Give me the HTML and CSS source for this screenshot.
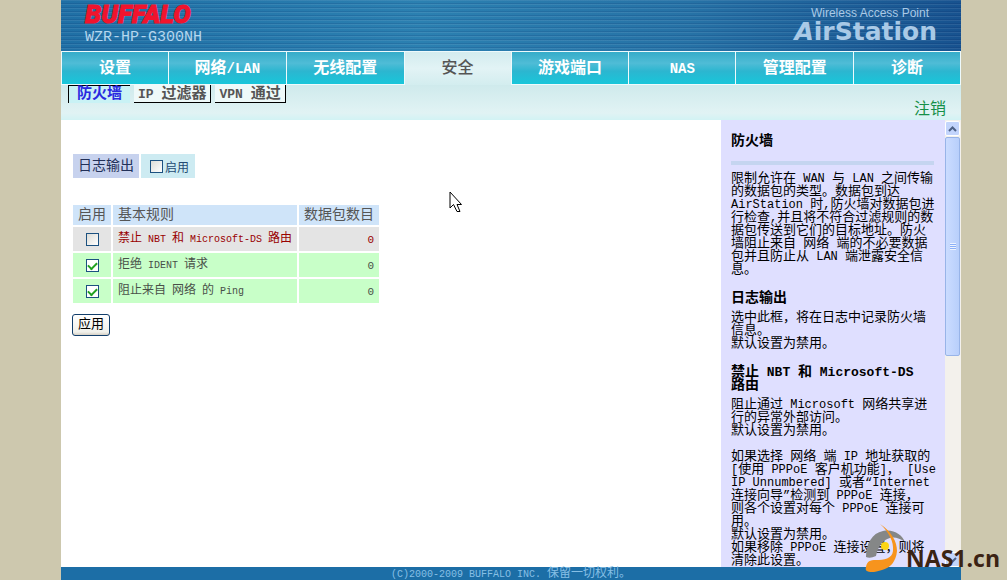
FILE: index.html
```html
<!DOCTYPE html>
<html lang="zh-CN">
<head>
<meta charset="utf-8">
<title>AirStation</title>
<link rel="stylesheet" href="styles.css">
</head>
<body>
<div class="page">
  <header class="banner">
    <div class="brand">
      <div class="logo">BUFFALO</div>
      <div class="model">WZR-HP-G300NH</div>
    </div>
    <div class="product">
      <div class="tagline">Wireless Access Point</div>
      <div class="product-name"><i>A</i>irStation</div>
    </div>
  </header>
  <nav class="tabs">
    <a class="tab" href="#">设置</a>
    <a class="tab wide" href="#">网络<span class="en">/LAN</span></a>
    <a class="tab wide" href="#">无线配置</a>
    <a class="tab active" href="#">安全</a>
    <a class="tab wide" href="#">游戏端口</a>
    <a class="tab" href="#"><span class="en">NAS</span></a>
    <a class="tab wide" href="#">管理配置</a>
    <a class="tab" href="#">诊断</a>
  </nav>
  <div class="subbar">
    <nav class="subtabs">
      <a class="subtab current" href="#">防火墙</a>
      <a class="subtab" href="#"><span class="en">IP </span>过滤器</a>
      <a class="subtab" href="#"><span class="en">VPN </span>通过</a>
    </nav>
    <a class="logout" href="#">注销</a>
  </div>
  <div class="body">
    <main class="content">
      <form>
        <div class="log-row">
          <div class="log-name">日志输出</div>
          <label class="log-value"><input type="checkbox" class="check">启用</label>
        </div>
        <table class="rules">
          <thead>
            <tr><th>启用</th><th>基本规则</th><th>数据包数目</th></tr>
          </thead>
          <tbody>
            <tr class="off">
              <td class="pick"><input type="checkbox" class="check" id="r1"></td>
              <td><label for="r1">禁止<span class="en"> NBT </span>和<span class="en"> Microsoft-DS </span>路由</label></td>
              <td class="count"><span class="en">0</span></td>
            </tr>
            <tr class="on">
              <td class="pick"><input type="checkbox" class="check" id="r2" checked></td>
              <td><label for="r2">拒绝<span class="en"> IDENT </span>请求</label></td>
              <td class="count"><span class="en">0</span></td>
            </tr>
            <tr class="on">
              <td class="pick"><input type="checkbox" class="check" id="r3" checked></td>
              <td><label for="r3">阻止来自<span class="en"> </span>网络<span class="en"> </span>的<span class="en"> Ping</span></label></td>
              <td class="count"><span class="en">0</span></td>
            </tr>
          </tbody>
        </table>
        <button type="button" class="apply">应用</button>
      </form>
    </main>
    <aside class="help">
      <h2>防火墙</h2>
      <hr>
      <p>限制允许在<span class="en"> WAN </span>与<span class="en"> LAN </span>之间传输<br>的数据包的类型。数据包到达<br><span class="en">AirStation </span>时<span class="en">,</span>防火墙对数据包进<br>行检查<span class="en">,</span>并且将不符合过滤规则的数<br>据包传送到它们的目标地址。防火<br>墙阻止来自<span class="en"> </span>网络<span class="en"> </span>端的不必要数据<br>包并且防止从<span class="en"> LAN </span>端泄露安全信<br>息。</p>
      <h3>日志输出</h3>
      <p>选中此框，将在日志中记录防火墙<br>信息。<br>默认设置为禁用。</p>
      <h3>禁止<span class="en"> NBT </span>和<span class="en"> Microsoft-DS</span><br>路由</h3>
      <p>阻止通过<span class="en"> Microsoft </span>网络共享进<br>行的异常外部访问。<br>默认设置为禁用。</p>
      <p class="more">如果选择<span class="en"> </span>网络<span class="en"> </span>端<span class="en"> IP </span>地址获取的<br><span class="en">[</span>使用<span class="en"> PPPoE </span>客户机功能<span class="en">]</span>，<span class="en"> [Use</span><br><span class="en">IP Unnumbered] </span>或者<span class="en">“Internet</span><br>连接向导<span class="en">”</span>检测到<span class="en"> PPPoE </span>连接，<br>则各个设置对每个<span class="en"> PPPoE </span>连接可<br>用。<br>默认设置为禁用。<br>如果移除<span class="en"> PPPoE </span>连接设置，则将<br>清除此设置。</p>
    </aside>
    <div class="scrollbar">
      <div class="arrow"><svg width="9" height="6" viewBox="0 0 9 6"><path d="M1 5 4.500 1.500 8 5" fill="none" stroke="#4d6185" stroke-width="2"/></svg></div>
      <div class="thumb"><div class="grip"></div></div>
      <div class="arrow end"><svg width="9" height="6" viewBox="0 0 9 6"><path d="M1 1 4.500 4.500 8 1" fill="none" stroke="#4d6185" stroke-width="2"/></svg></div>
    </div>
  </div>
  <footer class="footer"><span class="en">(C)2000-2009 BUFFALO INC. </span>保留一切权利。</footer>
</div>
<svg class="pointer" width="14" height="22" viewBox="0 0 14 22"><path d="M1 1V17L4.500 13.500 8 20.500H11L8 13.500H12.500Z" fill="#fff" stroke="#000"/></svg>
<div class="watermark">
  <svg width="42" height="50" viewBox="0 0 42 50">
    <path d="M2 33C2 20 8 9 19 7C30 5 38 11 41 18C33 12 25 12 19 18C14 23 13 28 12 32Q6 35 2 33Z" fill="#858787"/>
    <path d="M2 43C3 37 6 36 12 36C20 36 28 35 29 27C30 18 25 8 16 0C28 8 33 18 33 27C32 38 26 44 18 46C12 48 6 49 3 47Q1 46 2 43Z" fill="#f7941d"/>
    <circle cx="21" cy="22" r="4" fill="#fcd515"/>
  </svg>
  <span>NAS1.cn</span>
</div>
</body>
</html>
```
FILE: styles.css
```css
* { box-sizing: border-box; }

body {
  margin: 0;
  background: #cdc8ae;
  font-family: "Liberation Sans", "Noto Sans CJK SC", sans-serif;
  font-size: 13px;
}

a { text-decoration: none; color: inherit; }

.en { font-family: "Liberation Mono", monospace; white-space: pre; }

.page {
  display: flex;
  flex-direction: column;
  height: 100vh;
  margin: 0 46px 0 61px;
  background: #fff;
  overflow: hidden;
}

.banner {
  flex: none;
  display: flex;
  justify-content: space-between;
  height: 51px;
  padding: 0 24px;
  background:
    repeating-linear-gradient(rgba(255, 255, 255, 0.08) 0 1px, transparent 1px 3px, rgba(0, 20, 80, 0.12) 3px 4px),
    linear-gradient(90deg, #1f6fa5, #2b80b1 40%, #2672a6 70%, #17528f);
}

.logo {
  font: italic 900 26px/28px "Liberation Sans Narrow", Roboto, sans-serif;
  color: #f0142d;
  -webkit-text-stroke: 1px #f0142d;
}

.model {
  font: 15px/20px "Liberation Mono", monospace;
  color: #b4d6ee;
}

.product { text-align: right; color: #a9c9e6; }
.tagline { padding: 6px 8px 0 0; font-size: 12px; line-height: 14px; }
.product-name { font: bold 25px/24px "DejaVu Sans", sans-serif; }

.tabs {
  flex: none;
  display: flex;
  gap: 1px;
  height: 34px;
  padding: 1px;
  background: #eefafc;
}

.tab {
  flex: 107 1 0;
  background: linear-gradient(#35acc9, #4fbcd6 35%, #2cb6d0 60%, #18c6da);
  color: #fff;
  font-size: 16px;
  font-weight: bold;
  line-height: 31px;
  text-align: center;
}

.tab.wide { flex-grow: 118; }
.tab .en { font-size: 14px; }

.tab.active {
  margin-bottom: -1px;
  background: linear-gradient(#d3ecef, #e2f3f5 50%, #d3edef);
  color: #555;
  font-weight: 500;
}

.subbar {
  flex: none;
  display: flex;
  justify-content: space-between;
  height: 35px;
  padding: 0 15px 0 7px;
  background: linear-gradient(#cfeaec, #e1f3f4 80%, #d2f3f4);
}

.subtabs { display: flex; gap: 4px; align-items: flex-start; }

.subtab {
  height: 18px;
  padding: 0 4px;
  border: solid #000;
  border-width: 0 1px 1px 0;
  background: #eef9f9;
  color: #555;
  font-size: 15px;
  font-weight: bold;
  line-height: 16px;
}

.subtab.current {
  padding: 0 8px;
  border-width: 1px 0 0 1px;
  background: #c9f2f5;
  color: #2a2ae0;
  line-height: 14px;
}

.subtab .en { font-size: 13px; }

.logout { padding-top: 13px; color: #159048; font-size: 16px; line-height: 22px; }

.body { flex: 1; display: flex; min-height: 0; }

.content { flex: 1; padding: 34px 12px 0 10px; }

.log-row { display: flex; gap: 2px; height: 24px; margin-left: 2px; }

.log-name {
  padding: 0 5px;
  background: #c7d2ee;
  color: #223058;
  font-size: 14px;
  line-height: 22px;
}

.log-value {
  display: flex;
  align-items: center;
  gap: 2px;
  padding: 1px 6px 0 9px;
  background: #cdebf2;
  color: #234a72;
  font-size: 12px;
}

.check {
  appearance: none;
  display: grid;
  place-content: center;
  width: 13px;
  height: 13px;
  margin: 0;
  border: 1px solid #1c5180;
  background: linear-gradient(135deg, #dcdcd7, #fff);
}

.check:checked { background: #fff; }

.check:checked::before {
  content: "";
  width: 7px;
  height: 4px;
  border: solid #21a121;
  border-width: 0 0 2px 2px;
  transform: translateY(-1px) rotate(-45deg);
}

.rules {
  margin-top: 25px;
  border-spacing: 2px;
  color: #485048;
  font-size: 12px;
}

.rules th {
  height: 20px;
  padding: 0 5px;
  background: #cfe4f9;
  color: #555;
  font-size: 14px;
  font-weight: normal;
  line-height: 18px;
  text-align: left;
  vertical-align: top;
}

.rules td {
  height: 24px;
  padding: 0 5px;
  line-height: 18px;
}

.rules .en { font-size: 10px; }
.rules .pick { padding: 1px 0 0; }
.rules .pick .check { margin: 0 auto; }
.rules .count { text-align: right; }
.rules .count .en { font-size: 11px; }
.off td { background: #e4e4e4; color: #900; }
.on td { background: #c8ffc8; }

.apply {
  display: block;
  height: 22px;
  margin: 9px 0 0 1px;
  padding: 0 5px 2px;
  border: 1px solid #123e6b;
  border-radius: 3px;
  background: linear-gradient(#fff, #f0f0ea 85%, #d6d0c5);
  color: #000;
  font-family: inherit;
  font-size: 13px;
  line-height: 16px;
}

.help {
  flex: none;
  width: 224px;
  padding: 13px 8px 0 10px;
  background: #dfdfff;
  overflow: hidden;
  white-space: nowrap;
  font-size: 13px;
  line-height: 13px;
}

.help p, .help h2, .help h3 { margin: 0; }
.help h2 { font-size: 14px; line-height: 14px; }
.help hr { height: 4px; margin: 14px 3px 6px 0; border: 0; background: #c5d5f0; }
.help h3 { margin: 16px 0 6px; font-size: 14px; line-height: 13px; }
.help .more { margin-top: 13px; }
.help .en { font-size: 12px; line-height: 1px; }
.help h3 .en { font-size: 13px; }

.scrollbar {
  flex: none;
  display: flex;
  flex-direction: column;
  width: 16px;
  padding: 1px 1px 0 0;
  background: #f3f1ec;
}

.arrow {
  display: grid;
  place-items: center;
  height: 15px;
  border: 1px solid #fff;
  border-radius: 2px;
  background: #c3d5fc;
}

.arrow.end { margin-top: auto; }

.thumb {
  display: grid;
  place-items: center;
  height: 49%;
  margin-top: 1px;
  border: 1px solid #98b4e8;
  border-radius: 2px;
  background: linear-gradient(90deg, #cbdcff, #b8cffb);
}

.grip {
  width: 6px;
  height: 7px;
  background: repeating-linear-gradient(#eef4fe 0 1px, #8cb0f8 1px 2px);
}

.footer {
  flex: none;
  height: 13px;
  background: #1c6ea6;
  color: #86bfe5;
  font-size: 12px;
  line-height: 13px;
  text-align: center;
}

.footer .en { font-size: 10px; }

.pointer { position: absolute; left: 449px; top: 191px; }

.watermark {
  position: absolute;
  right: 7px;
  bottom: 6px;
  display: flex;
  align-items: flex-end;
  color: #3b2314;
  font: bold 23px/32px "Open Sans", "Noto Sans", sans-serif;
}
```
